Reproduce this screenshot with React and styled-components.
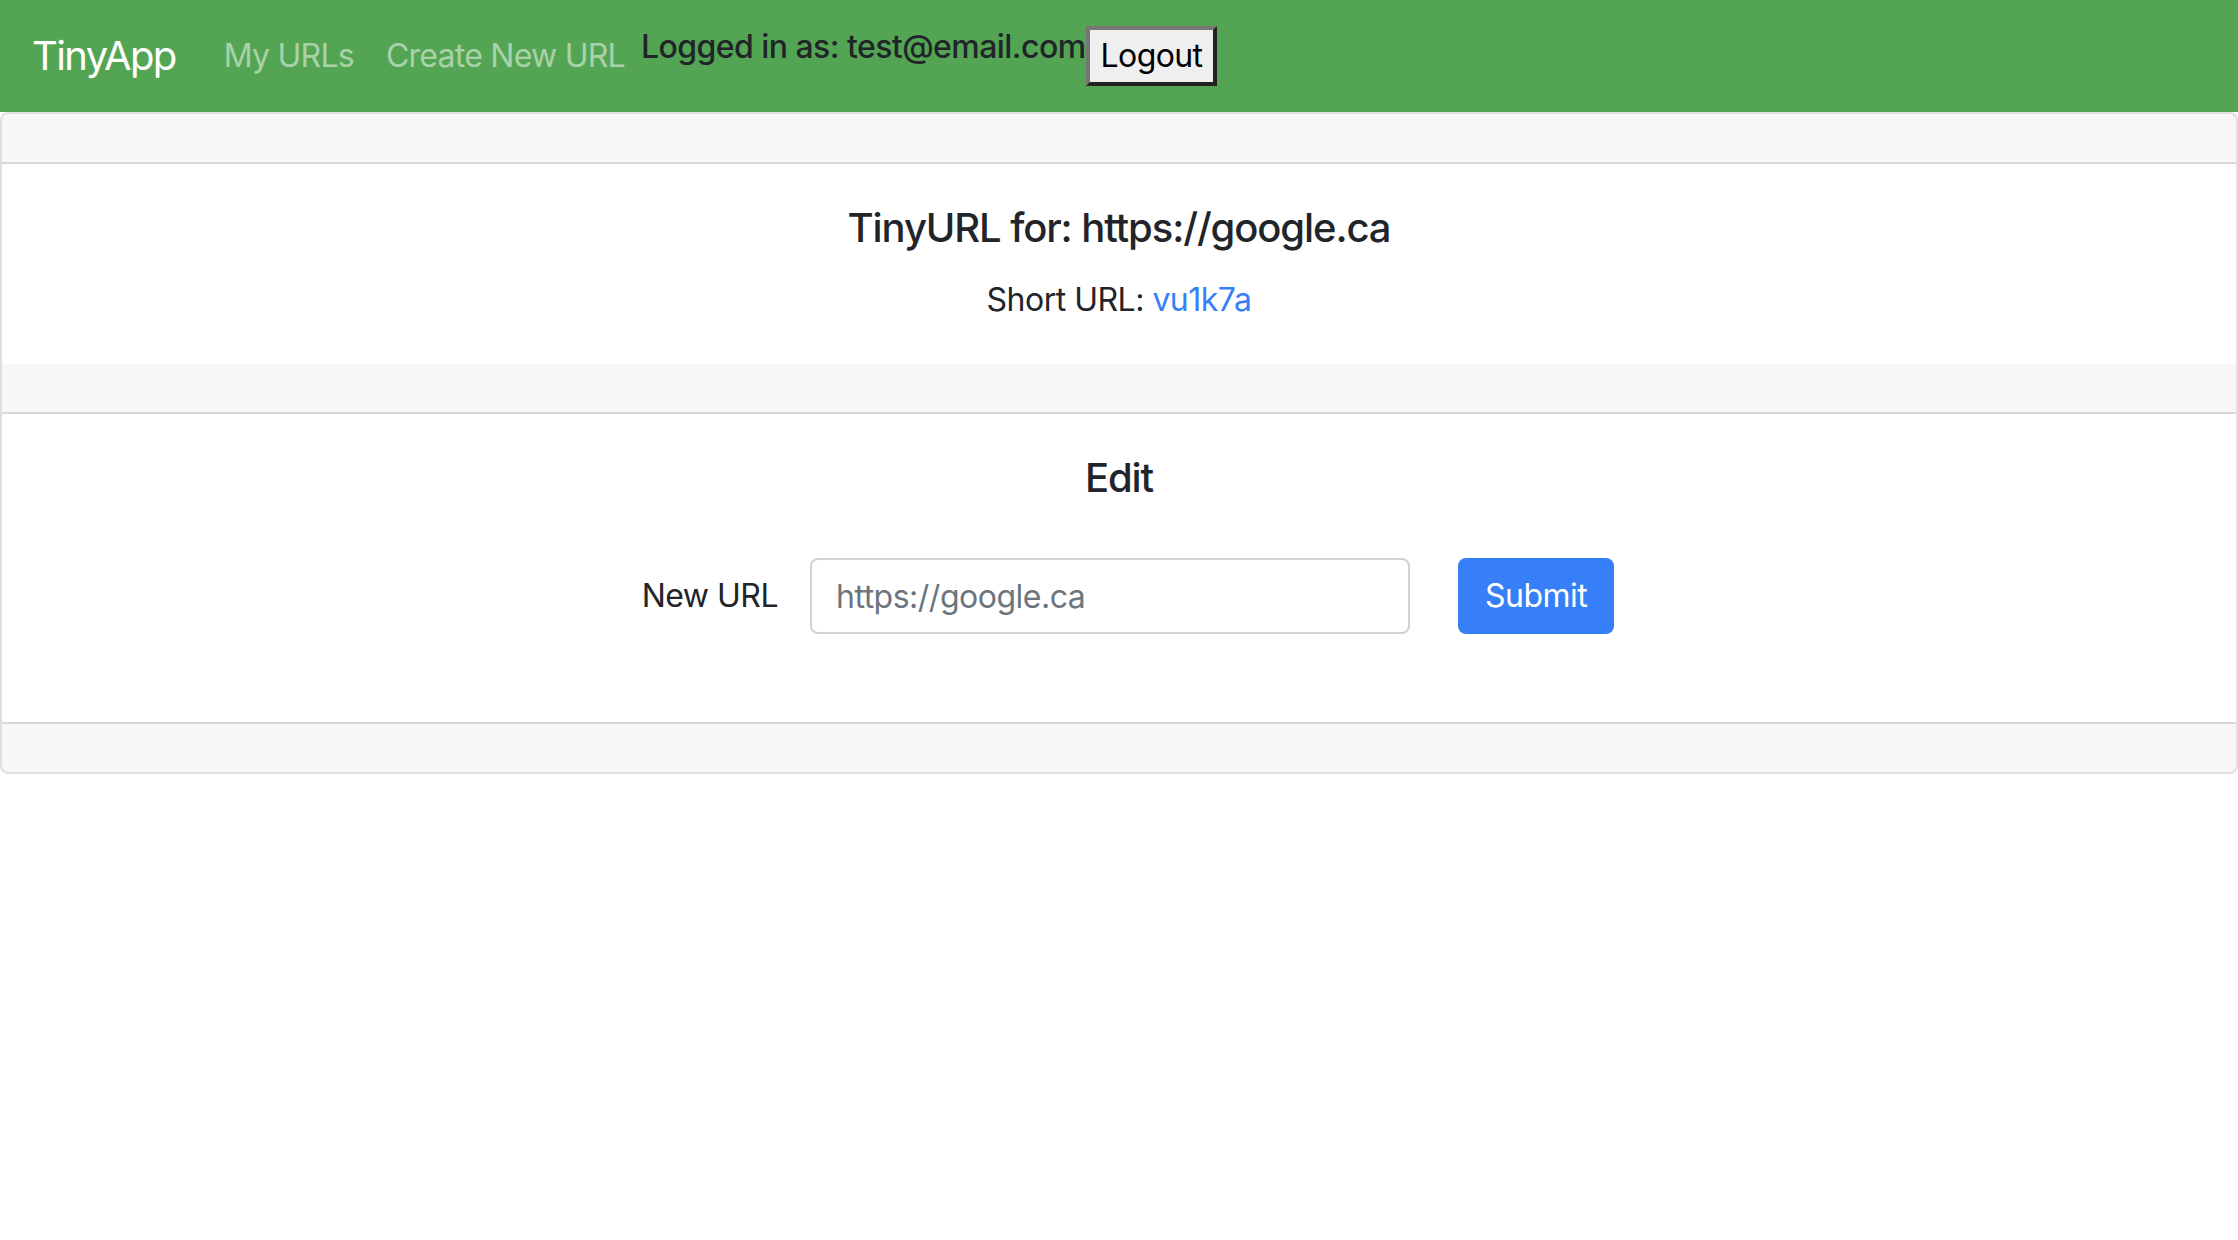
import React from 'react';
import styled, { createGlobalStyle } from 'styled-components';

const GlobalStyle = createGlobalStyle`
  * {
    box-sizing: border-box;
  }

  body {
    margin: 0;
    font-family: Inter, 'Noto Sans', sans-serif;
    font-size: 32px;
    line-height: 1.5;
    letter-spacing: -0.5px;
    color: #212529;
    background: #ffffff;
  }
`;

function NavBar() {
  return (
    <Styled.Nav>
      <Styled.Brand href="#">TinyApp</Styled.Brand>
      <Styled.NavList>
        <Styled.NavLink href="#">My URLs</Styled.NavLink>
        <Styled.NavLink href="#">Create New URL</Styled.NavLink>
      </Styled.NavList>
      <Styled.Session>
        <Styled.LoggedIn>Logged in as: test@email.com</Styled.LoggedIn>
        <Styled.LogoutButton type="button">Logout</Styled.LogoutButton>
      </Styled.Session>
    </Styled.Nav>
  );
}

function EditForm() {
  return (
    <Styled.Form onSubmit={(e) => e.preventDefault()}>
      <Styled.Label htmlFor="newURL">New URL</Styled.Label>
      <Styled.Input id="newURL" type="text" placeholder="https://google.ca" />
      <Styled.SubmitButton type="submit">Submit</Styled.SubmitButton>
    </Styled.Form>
  );
}

export default function App() {
  return (
    <>
      <GlobalStyle />
      <NavBar />
      <Styled.Card>
        <Styled.CardHeader />
        <Styled.CardBody>
          <Styled.Title>TinyURL for: https://google.ca</Styled.Title>
          <Styled.Text>
            Short URL: <Styled.Link href="#">vu1k7a</Styled.Link>
          </Styled.Text>
        </Styled.CardBody>
        <Styled.CardHeader />
        <Styled.CardBody>
          <Styled.Title>Edit</Styled.Title>
          <EditForm />
        </Styled.CardBody>
        <Styled.CardFooter />
      </Styled.Card>
    </>
  );
}

const Styled = {};

Styled.Nav = styled.nav`
  display: flex;
  align-items: center;

  height: 112px;
  padding: 16px 32px;

  background-color: #53a553;
`;

Styled.Brand = styled.a`
  margin-right: 32px;
  padding: 10px 0;

  font-size: 40px;
  line-height: 60px;
  letter-spacing: -1.6px;
  color: #ffffff;
  text-decoration: none;
`;

Styled.NavList = styled.div`
  display: flex;
`;

Styled.NavLink = styled.a`
  padding: 16px;

  letter-spacing: -0.75px;
  color: rgba(255, 255, 255, 0.5);
  text-decoration: none;
`;

Styled.Session = styled.div`
  display: flex;
  align-items: center;
`;

Styled.LoggedIn = styled.span`
  margin-bottom: 18px;

  font-weight: 500;
  letter-spacing: -0.55px;
  color: #212529;
`;

Styled.LogoutButton = styled.button`
  height: 60px;
  padding: 6px 11px;

  font-family: Inter, 'Noto Sans', sans-serif;
  font-size: 32px;
  line-height: 40px;
  letter-spacing: -0.6px;
  color: #000000;

  background-color: #efefef;
  border: 4px solid;
  border-color: #767676 #222222 #222222 #767676;
`;

Styled.Card = styled.div`
  border: 2px solid rgba(0, 0, 0, 0.125);
  border-radius: 8px;
  overflow: hidden;
`;

Styled.CardHeader = styled.div`
  height: 50px;

  background-color: rgba(0, 0, 0, 0.03);
  border-bottom: 2px solid rgba(0, 0, 0, 0.125);
`;

Styled.CardFooter = styled.div`
  height: 50px;

  background-color: rgba(0, 0, 0, 0.03);
  border-top: 2px solid rgba(0, 0, 0, 0.125);
`;

Styled.CardBody = styled.div`
  padding: 40px;

  text-align: center;
`;

Styled.Title = styled.h5`
  margin: 0 0 24px;

  font-size: 40px;
  font-weight: 500;
  line-height: 48px;
  letter-spacing: -1.1px;
`;

Styled.Text = styled.p`
  margin: 0;

  line-height: 48px;
`;

Styled.Link = styled.a`
  color: #377ff6;
  text-decoration: none;
`;

Styled.Form = styled.form`
  display: flex;
  align-items: center;
  justify-content: center;

  margin: 56px 0 48px;
  padding-left: 18px;
`;

Styled.Label = styled.label`
  margin-right: 32px;
`;

Styled.Input = styled.input`
  width: 600px;
  height: 76px;
  margin-right: 48px;
  padding: 12px 24px;

  font-family: Inter, 'Noto Sans', sans-serif;
  font-size: 32px;
  letter-spacing: -0.5px;
  color: #495057;

  border: 2px solid #ced4da;
  border-radius: 8px;

  &::placeholder {
    color: #6c757d;
  }
`;

Styled.SubmitButton = styled.button`
  height: 76px;
  padding: 12px 25px;

  font-family: Inter, 'Noto Sans', sans-serif;
  font-size: 32px;
  line-height: 48px;
  letter-spacing: -0.5px;
  color: #ffffff;

  background-color: #377ff6;
  border: 2px solid #377ff6;
  border-radius: 8px;
`;
